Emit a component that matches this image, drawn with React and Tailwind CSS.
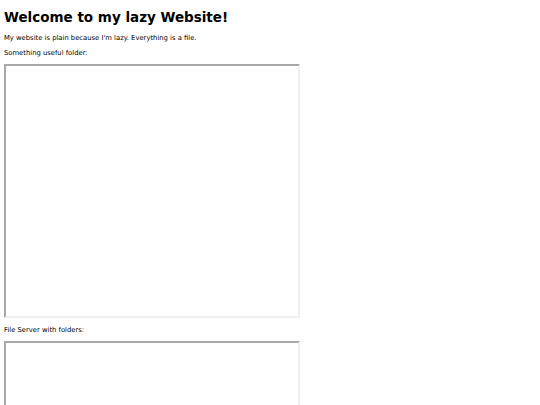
export default function App() {
  const frame =
    'w-[296px] border-2 border-t-[#a8a8a8] border-l-[#a8a8a8] border-r-[#f0f0f0] border-b-[#f0f0f0] bg-white'

  return (
    <div className="min-h-[405px] bg-white px-[4px] text-black font-['DejaVu_Sans',Verdana,sans-serif]">
      <h1 className="pt-[7px] text-[13.5px] leading-[20px] font-bold">Welcome to my lazy Website!</h1>
      <p className="mt-[7px] text-[6.8px] leading-[8px]">My website is plain because I'm lazy. Everything is a file.</p>
      <p className="mt-[7px] text-[6.8px] leading-[8px]">Something useful folder:</p>
      <div className={`mt-[7px] h-[254px] ${frame}`} />
      <p className="mt-[8px] text-[6.8px] leading-[8px]">File Server with folders:</p>
      <div className={`mt-[7px] h-[254px] ${frame}`} />
    </div>
  )
}
